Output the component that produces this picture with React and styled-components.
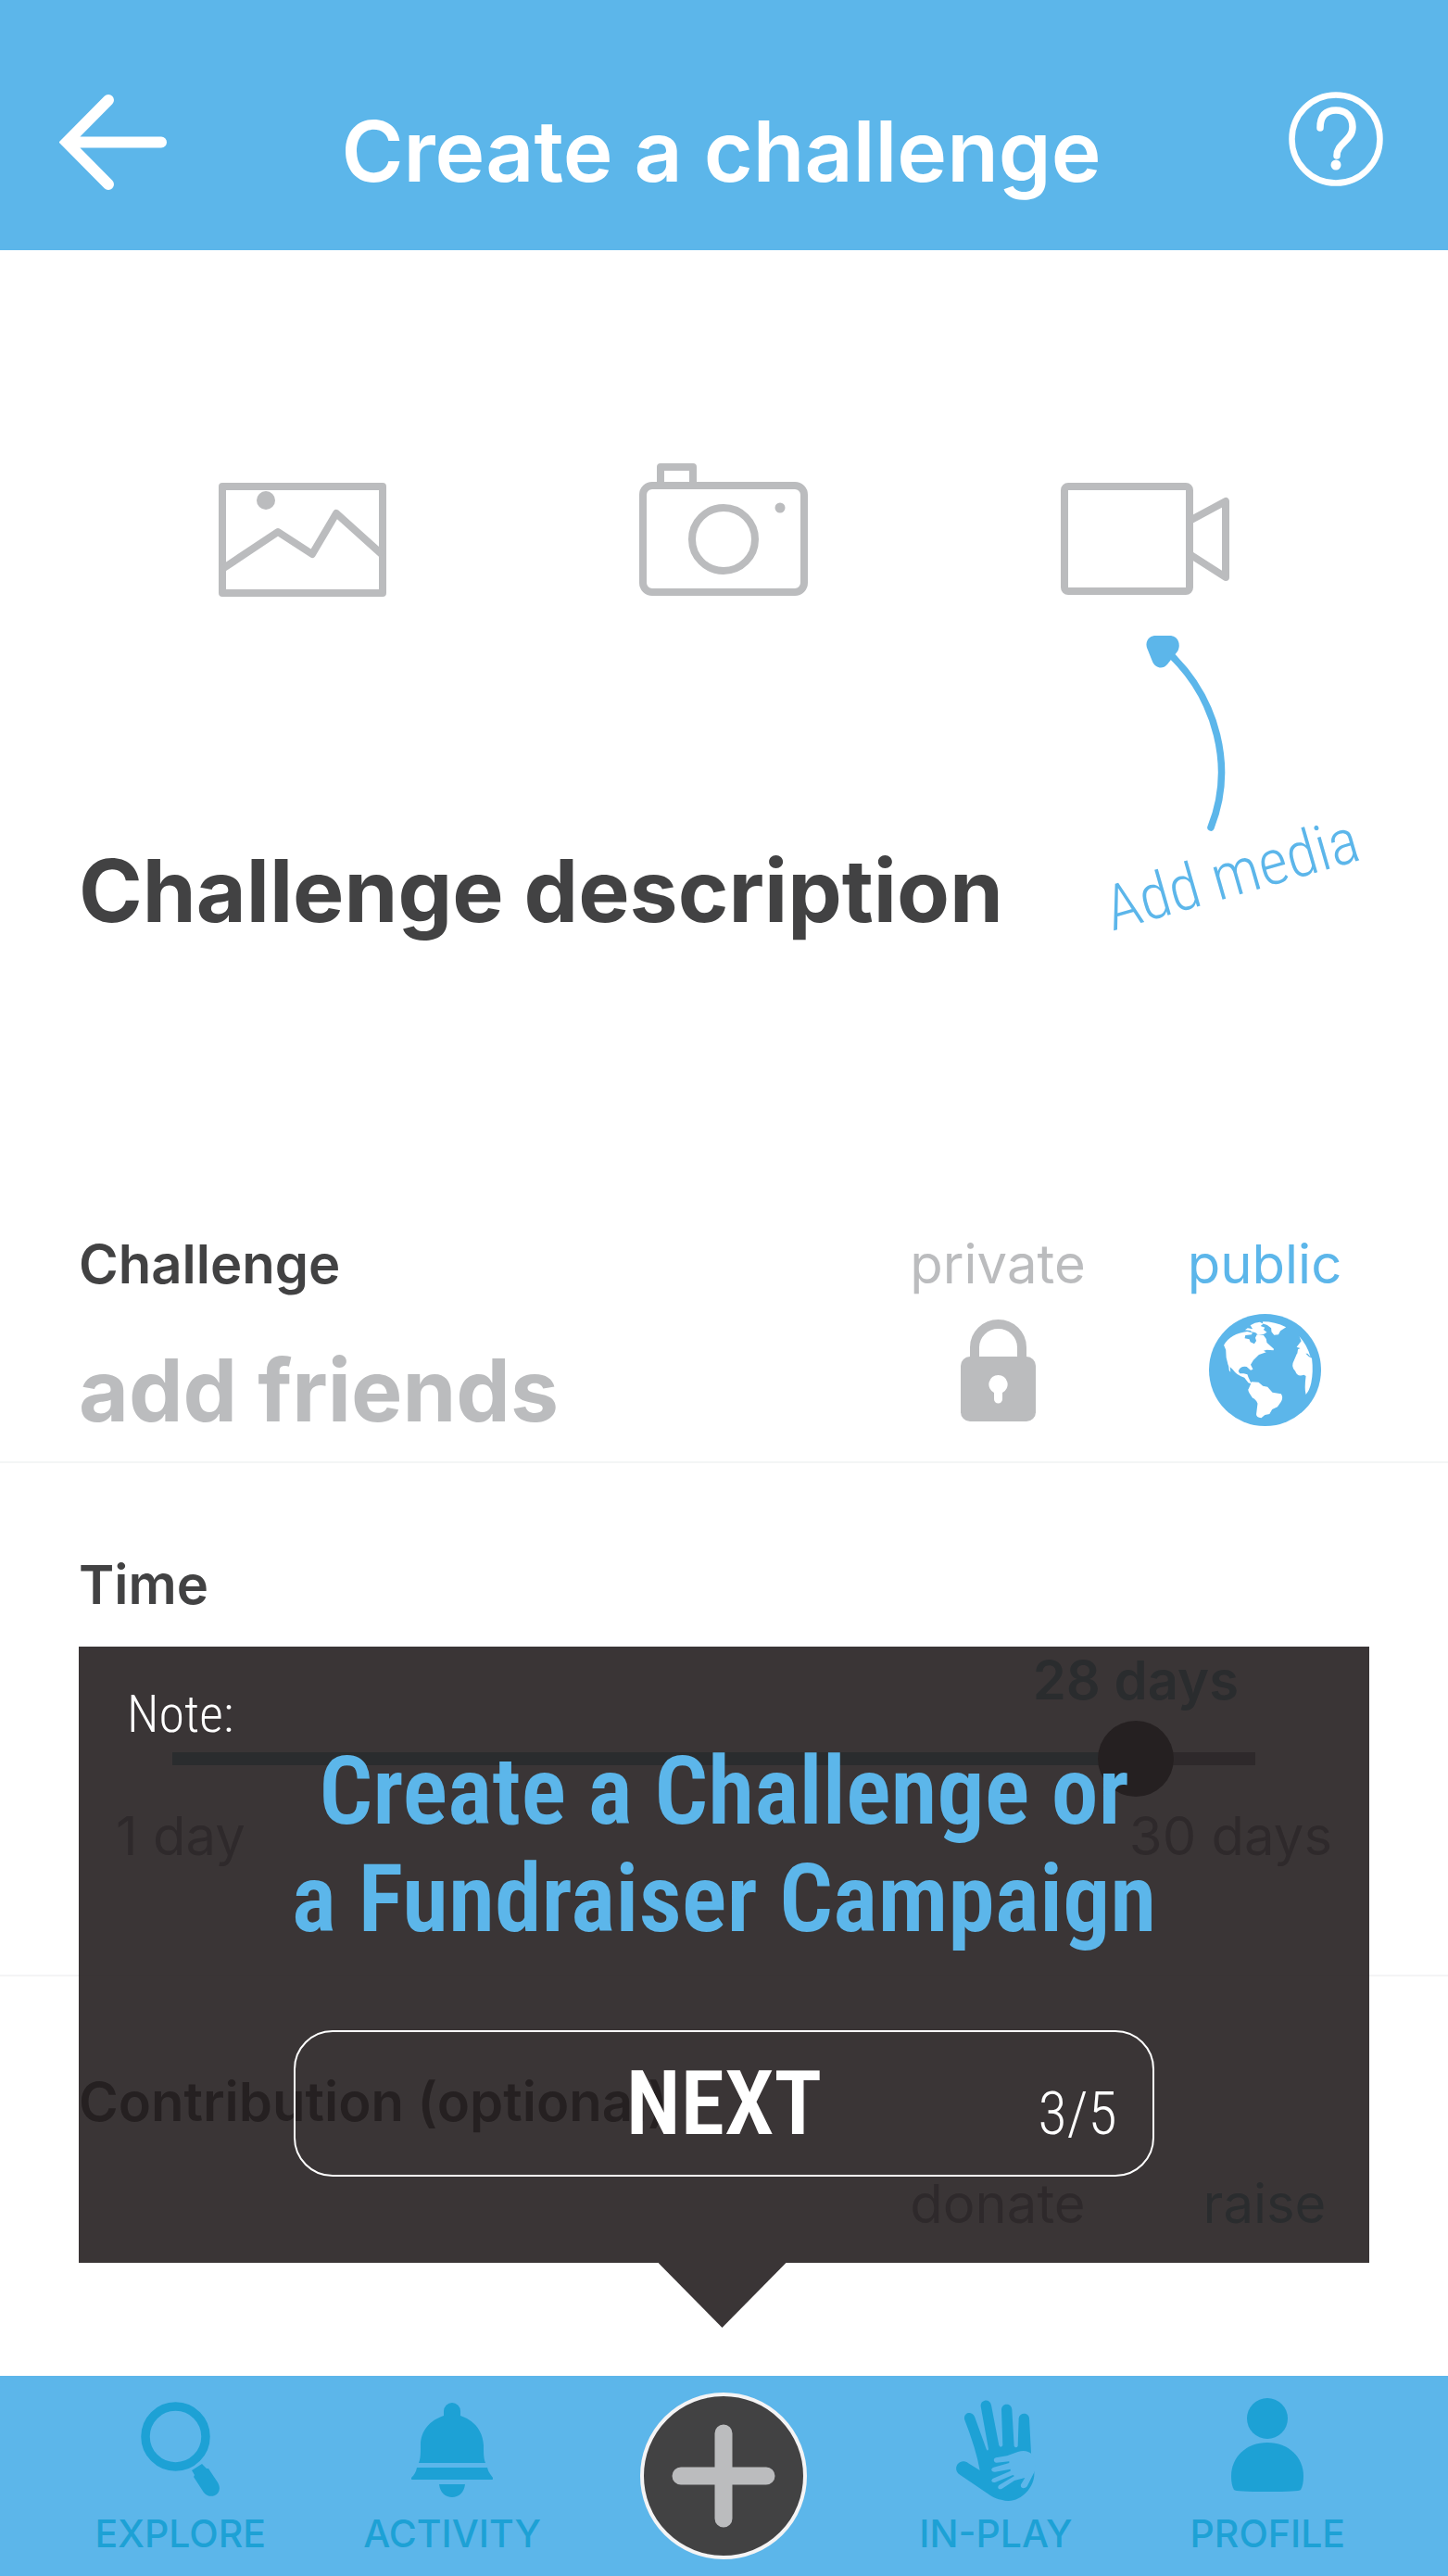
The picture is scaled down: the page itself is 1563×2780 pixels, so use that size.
import React, { useState } from "react";
import styled, { createGlobalStyle } from "styled-components";

const blue = "#5cb6ea";
const deepBlue = "#1da1d5";
const mutedBlue = "#6fa9b4";
const ink = "#424243";
const grey = "#bbbcbe";
const midGrey = "#949698";

const sans = `Inter, "Liberation Sans", sans-serif`;
const hand = `"Roboto Condensed", Lato, "Open Sans", sans-serif`;

const GlobalStyle = createGlobalStyle`
  *, *::before, *::after { box-sizing: border-box; }
  body { margin: 0; background: #fff; color: ${ink}; font-family: ${sans}; }
  h1, h2, h3, p { margin: 0; font: inherit; }
  button { border: 0; padding: 0; background: none; font: inherit; color: inherit; cursor: pointer; }
  svg { display: block; }
`;

const Page = styled.div`
  min-height: 100vh;
  display: flex;
  flex-direction: column;
`;

const Header = styled.header`
  display: grid;
  grid-template-columns: 1fr auto 1fr;
  align-items: start;
  padding: 99px 70px 52px 64px;
  color: #fff;
  background: ${blue};
`;

const Title = styled.h1`
  padding-top: 9px;
  font-size: 91px;
  font-weight: 600;
  line-height: 110px;
`;

const IconButton = styled.button`
  justify-self: ${(p) => p.$side};
`;

const Main = styled.main`
  position: relative;
  flex: 1;
`;

const MediaRow = styled.div`
  position: relative;
  display: grid;
  grid-template-columns: repeat(3, 1fr);
  align-items: end;
  justify-items: center;
  padding: 230px 98px 0;
  color: ${grey};
`;

const MediaHint = styled.div`
  position: absolute;
  top: 416px;
  right: 94px;
  width: 280px;
  color: ${blue};
`;

const HintText = styled.p`
  font-family: ${hand};
  font-size: 68px;
  font-weight: 300;
  line-height: 92px;
  text-align: center;
  white-space: nowrap;
  transform: rotate(-16deg);
`;

const HintArrow = styled.svg`
  margin-left: 48px;
`;

const Description = styled.div`
  padding: 262px 85px 312px;
`;

const BigInput = styled.input`
  display: block;
  width: 100%;
  height: 110px;
  padding: 0;
  border: 0;
  outline: 0;
  background: transparent;
  color: ${ink};
  font-family: ${sans};
  font-size: 93px;
  font-weight: 700;
  line-height: 110px;
  &::placeholder { color: ${(p) => p.$tone}; opacity: 1; }
`;

const ChallengeSection = styled.section`
  display: flex;
  justify-content: space-between;
  padding: 0 85px 22px;
  border-bottom: 2px solid #f4f6f6;
`;

const FriendsField = styled.div`
  flex: 1;
  min-width: 0;
  display: flex;
  flex-direction: column;
  gap: 45px;
`;

const Label = styled.label`
  display: block;
  font-size: 58px;
  font-weight: 600;
  line-height: 72px;
`;

const Choices = styled.div`
  display: flex;
  justify-content: flex-end;
  gap: 62px;
`;

const Choice = styled.label`
  display: flex;
  flex-direction: column;
  align-items: center;
  gap: 18px;
  width: 226px;
  font-size: 58px;
  line-height: 72px;
  color: ${(p) => p.$tone};
  cursor: pointer;
`;

const HiddenRadio = styled.input`
  position: absolute;
  opacity: 0;
  pointer-events: none;
`;

const ChoiceIcon = styled.span`
  display: flex;
  align-items: center;
  height: 121px;
`;

const TimeSection = styled.section`
  padding: 95px 85px 114px;
  border-bottom: 2px solid #f4f4f5;
`;

const SliderBox = styled.div`
  padding: 31px 123px 6px 101px;
`;

const SliderValue = styled.output`
  display: block;
  width: max-content;
  margin-bottom: 8px;
  color: ${mutedBlue};
  font-size: 58px;
  font-weight: 600;
  line-height: 72px;
  transform: translateX(-50%);
`;

const Slider = styled.input`
  appearance: none;
  display: block;
  width: 100%;
  height: 82px;
  margin: 0;
  background: transparent;
  &::-webkit-slider-runnable-track {
    height: 14px;
    background: linear-gradient(to right, ${mutedBlue} var(--fill), ${midGrey} var(--fill));
  }
  &::-webkit-slider-thumb {
    appearance: none;
    width: 82px;
    height: 82px;
    margin-top: -34px;
    border-radius: 50%;
    background: ${ink};
  }
`;

const SliderEnds = styled.div`
  display: flex;
  justify-content: space-between;
  padding: 0 40px;
  color: ${midGrey};
  font-size: 58px;
  line-height: 72px;
`;

const ContributionSection = styled.section`
  display: flex;
  flex-direction: column;
  gap: 38px;
  padding: 99px 85px 149px;
`;

const SectionTitle = styled.h2`
  font-size: 58px;
  font-weight: 600;
  line-height: 72px;
`;

const NoteCard = styled.aside`
  position: absolute;
  left: 85px;
  right: 85px;
  bottom: 122px;
  display: flex;
  flex-direction: column;
  padding: 48px 52px 93px;
  background: rgba(34, 28, 29, 0.89);
  color: #fff;
  font-family: ${hand};
  &::after {
    content: "";
    position: absolute;
    top: 100%;
    left: 50%;
    width: 138px;
    height: 70px;
    margin-left: -71px;
    background: inherit;
    clip-path: polygon(0 0, 100% 0, 50% 100%);
  }
`;

const NoteTag = styled.p`
  font-size: 56px;
  font-weight: 300;
  line-height: 50px;
`;

const NoteHeading = styled.h3`
  margin-bottom: 84px;
  color: ${blue};
  font-size: 102px;
  font-weight: 600;
  line-height: 116px;
  text-align: center;
`;

const NextButton = styled.button`
  display: grid;
  grid-template-columns: 1fr auto 1fr;
  align-items: baseline;
  align-self: center;
  width: 72%;
  padding: 24px 38px;
  border: 2px solid #fff;
  border-radius: 42px;
  font-size: 96px;
  font-weight: 600;
  line-height: 106px;
`;

const Step = styled.span`
  justify-self: end;
  font-size: 64px;
  font-weight: 300;
  line-height: 60px;
`;

const NextText = styled.span`
  grid-column: 2;
`;

const Nav = styled.nav`
  display: grid;
  grid-template-columns: repeat(5, 1fr);
  align-items: start;
  justify-items: center;
  padding: 18px 48px;
  background: ${blue};
`;

const NavLink = styled.a`
  display: flex;
  flex-direction: column;
  align-items: center;
  gap: 8px;
  padding-top: 6px;
  color: ${deepBlue};
  font-size: 41px;
  font-weight: 500;
  line-height: 52px;
  text-decoration: none;
`;

const NavIcon = styled.span`
  display: flex;
  align-items: ${(p) => p.$align || "center"};
  height: 112px;
`;

const AddButton = styled.button`
  display: grid;
  place-items: center;
  width: 180px;
  height: 180px;
  border: 4px solid #f4f4f5;
  border-radius: 50%;
  background: ${ink};
  color: ${grey};
`;

const BackIcon = () => (
  <svg width="116" height="108" viewBox="0 0 116 108" fill="none" stroke="currentColor" strokeWidth="12" strokeLinecap="round">
    <path d="M53 9 8 54.500 53 100M12 54.500h98" />
  </svg>
);

const HelpIcon = () => (
  <svg width="102" height="102" viewBox="0 0 102 102" fill="none" stroke="currentColor">
    <circle cx="51" cy="51" r="47.5" strokeWidth="6.5" />
    <path d="M34 39c0-13 6-19 17-19s18 7 18 18c0 15-17 17-17 31" strokeWidth="7.5" strokeLinecap="round" />
    <circle cx="51" cy="79" r="5.5" fill="currentColor" stroke="none" />
  </svg>
);

const PictureIcon = () => (
  <svg width="182" height="124" viewBox="0 0 182 124" fill="none" stroke="currentColor" strokeWidth="8" strokeLinejoin="round">
    <rect x="5" y="5" width="173" height="115" />
    <path d="m5 94 60-40 37 24 26-44 50 45" />
    <circle cx="52" cy="20" r="10" fill="currentColor" stroke="none" />
  </svg>
);

const CameraIcon = () => (
  <svg width="182" height="144" viewBox="0 0 182 144" fill="none" stroke="currentColor" strokeWidth="8" strokeLinejoin="round">
    <rect x="4" y="24" width="174" height="115" rx="10" />
    <path d="M23 24V4h35v20" />
    <circle cx="91" cy="82" r="34" />
    <circle cx="152" cy="48" r="5.5" fill="currentColor" stroke="none" />
  </svg>
);

const VideoIcon = () => (
  <svg width="184" height="124" viewBox="0 0 184 124" fill="none" stroke="currentColor" strokeWidth="8" strokeLinejoin="round">
    <rect x="4" y="5" width="135" height="113" rx="4" />
    <path d="m139 42 39-21v82l-39-25" />
  </svg>
);

const LockIcon = () => (
  <svg width="81" height="112" viewBox="0 0 81 112" fill="currentColor">
    <path d="M15 44V31a25.500 25 0 0 1 51 0v13" fill="none" stroke="currentColor" strokeWidth="10" />
    <path fillRule="evenodd" d="M10 41h61a10 10 0 0 1 10 10v50a10 10 0 0 1-10 10H10a10 10 0 0 1-10-10V51a10 10 0 0 1 10-10Zm30.500 20a10 10 0 0 0-4.500 19v7a4.500 4.500 0 0 0 9 0v-7a10 10 0 0 0-4.500-19Z" />
  </svg>
);

const GlobeIcon = () => (
  <svg width="121" height="121" viewBox="0 0 121 121">
    <circle cx="60.500" cy="60.500" r="60.500" fill={blue} />
    <g fill="#fff" transform="scale(0.357 0.3333) translate(-1019 -327)">
      <path d="M1064 428q20-38 71-44l15 4-2 6-19 2-2 10 14 3 3 9 12 6 6-10-3-10 5-10 20 2 8 12 2 12 21 20-1 5-20-2-10 3 8 5-22 8-17 18-8 14 7 15-7 3-12-11q-20-3-25 14l4 8 12 0 11 3 3 9 7 16 15 3-7 4-15-5-12-17q-22-6-35-26l-14-14q-8-25-7-50Z" />
      <path d="m1077 484 5 3 2 28-4-5ZM1128 379l8-6 15 3-7-12 14-8 15-3 10 6-8 7 13 5-4 7 10 8-10 7-16 2-9-8-12-2-2-4ZM1182 352q36 0 70 18l-17 12-6 12-13 1-8-10-1-12-12-10-14-5Z" />
      <path d="M1292 400q24 28 34 66l-9-11h-31l2-13 7-4-11-4 8-11 6-8ZM1285 455l25-1 11 11 9 5q5 43-2 80-5 25-16 38-5-20 0-60l-6-4q-20 8-26-12-15-14-4-34Z" />
      <path d="m1148 547 21 1 13 12 14 3 15 18 26 5q8 12-1 27l-10 15-16 8-8 15-14 3-11 10q-15-2-15-12l4-35q-5-14-15-18-18-26-12-30Z" />
    </g>
  </svg>
);

const ExploreIcon = () => (
  <svg width="86" height="104" viewBox="0 0 86 104" fill="none" stroke="currentColor">
    <circle cx="37.500" cy="37.500" r="32.500" strokeWidth="9.500" />
    <path d="m55 74 11-7 5 5h2l10 15c7 12-7 20-15 11L57 81l1-2Z" fill="currentColor" stroke="none" />
  </svg>
);

const BellIcon = () => (
  <svg width="88" height="102" viewBox="0 0 88 102" fill="currentColor">
    <path d="M35 14V9a9 9 0 0 1 18 0v5c15 5 24 16 25 32 0 9 0 14 2 19H8c2-5 2-10 2-19C10 30 20 19 35 14ZM6 70h76c1 5 4 8 6 11q1 2-2 2H2q-3 0-2-2c3-3 5-6 6-11ZM30 88h28c-1 9-7 14-14 14s-13-5-14-14Z" />
  </svg>
);

const HandIcon = () => (
  <svg width="86" height="109" viewBox="0 0 86 109">
    <g transform="scale(0.3333) translate(-40 -46)">
      <path fill={deepBlue} d="M67 108C64 86 91 80 100 100l38 105q4 9 7 0L120 67c-2-22 29-28 34-4l25 130q6 10 12 0l-4-116c2-22 32-22 34 0l7 118q6 10 12 0l3-90c3-20 32-20 34 0l6 113 10 62c4 50-50 108-106 89Q170 368 152 356L48 285c-16-14-5-42 18-40q9 1 16 7l35 22Q105 205 67 108Z" />
      <path fill={blue} d="M286 222q-18-17-46-8l-35 13-36 6c-10 3-8 16 2 16l41-4v5l-50 14c-12 4-8 16 4 15l50-9v6l-56 24c-10 6-4 16 8 12l56-23 5 3-50 30c-8 8 0 17 10 11l40-26 34-9-13 22c-3 13 12 15 20 6l22-44 8-40Z" />
    </g>
  </svg>
);

const ProfileIcon = () => (
  <svg width="78" height="102" viewBox="0 0 78 102" fill="currentColor">
    <ellipse cx="39" cy="22" rx="22" ry="22" />
    <path d="M39 48c23 0 39 16 39 36q0 10-3 15-2 2-36 2t-36-2q-3-5-3-15c0-20 16-36 39-36Z" />
  </svg>
);

const PlusIcon = () => (
  <svg width="112" height="112" viewBox="0 0 112 112" stroke="currentColor" strokeWidth="19" strokeLinecap="round">
    <path d="M56 10v92M10 56h92" />
  </svg>
);

const MIN_DAYS = 1;
const MAX_DAYS = 30;
const THUMB = 82;

export default function App() {
  const [days, setDays] = useState(27.65);
  const [audience, setAudience] = useState("public");
  const ratio = (days - MIN_DAYS) / (MAX_DAYS - MIN_DAYS);
  const fill = `calc(${THUMB / 2}px + (100% - ${THUMB}px) * ${ratio})`;
  const tone = (name) => (audience === name ? blue : grey);

  return (
    <Page>
      <GlobalStyle />
      <Header>
        <IconButton $side="start" aria-label="Back"><BackIcon /></IconButton>
        <Title>Create a challenge</Title>
        <IconButton $side="end" aria-label="Help"><HelpIcon /></IconButton>
      </Header>

      <Main>
        <MediaRow>
          <button aria-label="Add picture"><PictureIcon /></button>
          <button aria-label="Take photo"><CameraIcon /></button>
          <button aria-label="Record video"><VideoIcon /></button>
          <MediaHint>
            <HintArrow width="88" height="212" viewBox="0 0 88 212" aria-hidden="true">
              <path d="M26 20C76 68 96 142 70 207" fill="none" stroke="currentColor" strokeWidth="7.500" strokeLinecap="round" />
              <path d="M9 0h18c8 1 11 10 7 17L23 31c-5 6-13 4-16-3L1 13C-1 6 3 1 9 0Z" fill="currentColor" />
            </HintArrow>
            <HintText>Add media</HintText>
          </MediaHint>
        </MediaRow>

        <Description>
          <BigInput $tone={ink} aria-label="Challenge description" placeholder="Challenge description" />
        </Description>

        <ChallengeSection>
          <FriendsField>
            <Label htmlFor="friends">Challenge</Label>
            <BigInput id="friends" $tone={grey} placeholder="add friends" />
          </FriendsField>
          <Choices role="radiogroup" aria-label="Audience">
            <Choice $tone={tone("private")}>
              <HiddenRadio type="radio" name="audience" checked={audience === "private"} onChange={() => setAudience("private")} />
              private
              <ChoiceIcon><LockIcon /></ChoiceIcon>
            </Choice>
            <Choice $tone={tone("public")}>
              <HiddenRadio type="radio" name="audience" checked={audience === "public"} onChange={() => setAudience("public")} />
              public
              <ChoiceIcon><GlobeIcon /></ChoiceIcon>
            </Choice>
          </Choices>
        </ChallengeSection>

        <TimeSection>
          <Label htmlFor="days">Time</Label>
          <SliderBox>
            <SliderValue htmlFor="days" style={{ marginLeft: fill }}>{Math.round(days)} days</SliderValue>
            <Slider
              id="days"
              type="range"
              min={MIN_DAYS}
              max={MAX_DAYS}
              step="any"
              value={days}
              onChange={(e) => setDays(Number(e.target.value))}
              style={{ "--fill": fill }}
            />
          </SliderBox>
          <SliderEnds>
            <span>1 day</span>
            <span>30 days</span>
          </SliderEnds>
        </TimeSection>

        <ContributionSection>
          <SectionTitle>Contribution (optional)</SectionTitle>
          <Choices role="radiogroup" aria-label="Contribution">
            <Choice $tone={midGrey}>
              <HiddenRadio type="radio" name="contribution" />
              donate
            </Choice>
            <Choice $tone={mutedBlue}>
              <HiddenRadio type="radio" name="contribution" defaultChecked />
              raise
            </Choice>
          </Choices>
        </ContributionSection>

        <NoteCard>
          <NoteTag>Note:</NoteTag>
          <NoteHeading>
            Create a Challenge or
            <br />
            a Fundraiser Campaign
          </NoteHeading>
          <NextButton>
            <NextText>NEXT</NextText>
            <Step>3/5</Step>
          </NextButton>
        </NoteCard>
      </Main>

      <Nav>
        <NavLink href="#explore"><NavIcon><ExploreIcon /></NavIcon>EXPLORE</NavLink>
        <NavLink href="#activity"><NavIcon><BellIcon /></NavIcon>ACTIVITY</NavLink>
        <AddButton aria-label="Add"><PlusIcon /></AddButton>
        <NavLink href="#in-play"><NavIcon><HandIcon /></NavIcon>IN-PLAY</NavLink>
        <NavLink href="#profile"><NavIcon $align="flex-start"><ProfileIcon /></NavIcon>PROFILE</NavLink>
      </Nav>
    </Page>
  );
}
